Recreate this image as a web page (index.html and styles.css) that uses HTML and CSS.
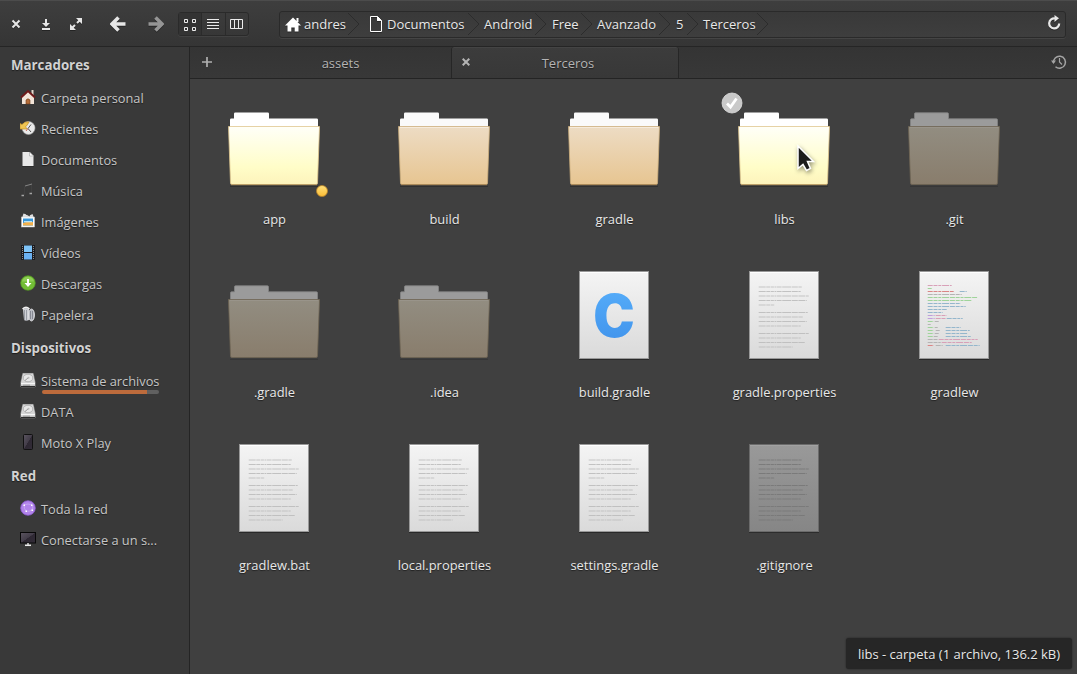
FILE: index.html
```html
<!DOCTYPE html>
<html lang="es">
<head>
<meta charset="utf-8">
<title>Terceros</title>
<link rel="stylesheet" href="styles.css">
</head>
<body>
<svg class="defs" width="0" height="0">
  <defs>
    <linearGradient id="gOpen" x1="0" y1="0" x2="0" y2="1"><stop offset="0" stop-color="#fffff8"/><stop offset=".7" stop-color="#fffdc8"/><stop offset="1" stop-color="#fdf3bb"/></linearGradient>
    <linearGradient id="gTan" x1="0" y1="0" x2="0" y2="1"><stop offset="0" stop-color="#eddcc4"/><stop offset="1" stop-color="#e7c591"/></linearGradient>
    <linearGradient id="gHid" x1="0" y1="0" x2="0" y2="1"><stop offset="0" stop-color="#928d81"/><stop offset="1" stop-color="#897d6c"/></linearGradient>
    <linearGradient id="gPage" x1="0" y1="0" x2="0" y2="1"><stop offset="0" stop-color="#f4f4f4"/><stop offset="1" stop-color="#dadada"/></linearGradient>
    <linearGradient id="gPageHid" x1="0" y1="0" x2="0" y2="1"><stop offset="0" stop-color="#999"/><stop offset="1" stop-color="#868686"/></linearGradient>
    <linearGradient id="gBlue" x1="0" y1="0" x2="0" y2="1"><stop offset="0" stop-color="#58b0fb"/><stop offset="1" stop-color="#3e90ea"/></linearGradient>
    <linearGradient id="gDot" x1="0" y1="0" x2="0" y2="1"><stop offset="0" stop-color="#ffe07a"/><stop offset="1" stop-color="#fbbc36"/></linearGradient>
    <linearGradient id="gScreen" x1="0" y1="0" x2="1" y2="1"><stop offset="0" stop-color="#5b5560"/><stop offset=".5" stop-color="#433d49"/><stop offset=".52" stop-color="#2e2833"/><stop offset="1" stop-color="#322c37"/></linearGradient>
  </defs>
  <symbol id="folder-open" viewBox="0 0 96 96">
    <path d="M4 95.300H92" stroke="#000" stroke-opacity=".3"/>
    <path d="M4 36V28.800q0-1.300 1.300-1.300H8V22.800q0-1.300 1.300-1.300H41.700q1.300 0 1.300 1.300V27.500H90.700q1.300 0 1.300 1.300V36z" fill="#fff"/>
    <path d="M2.500 35.500H93.500L91.500 92q0 1.500-1.500 1.500H6q-1.500 0-1.500-1.500z" fill="url(#gOpen)" stroke="#e0c68e" stroke-width=".8"/>
    <path d="M5 93.700H91" stroke="#b89a62"/>
  </symbol>
  <symbol id="folder" viewBox="0 0 96 96">
    <path d="M4 95.300H92" stroke="#000" stroke-opacity=".3"/>
    <path d="M4 36V28.800q0-1.300 1.300-1.300H8V22.800q0-1.300 1.300-1.300H41.700q1.300 0 1.300 1.300V27.500H90.700q1.300 0 1.300 1.300V36z" fill="#fafafa"/>
    <path d="M2.500 35.500H93.500L91.500 92q0 1.500-1.500 1.500H6q-1.500 0-1.500-1.500z" fill="url(#gTan)" stroke="#cdae7c" stroke-width=".8"/>
    <path d="M4 36.500H92" stroke="#f6ebdb"/>
    <path d="M5 93.700H91" stroke="#a88554"/>
  </symbol>
  <symbol id="folder-hidden" viewBox="0 0 96 96">
    <path d="M4 95.300H92" stroke="#000" stroke-opacity=".2"/>
    <path d="M4.500 36V28.800q0-1 1-1H8.500V22.800q0-1 1-1H41.500q1 0 1 1V27.800H90.500q1 0 1 1V36z" fill="#9b9b9b" stroke="#858585" stroke-width=".8"/>
    <path d="M2.500 35.500H93.500L91.500 92q0 1.500-1.500 1.500H6q-1.500 0-1.500-1.500z" fill="url(#gHid)" stroke="#6f6553" stroke-width=".8"/>
    <path d="M4 36.500H92" stroke="#99948a"/>
  </symbol>
  <symbol id="lines" viewBox="0 0 96 96">
    <g fill="none" stroke-dasharray="7 .6 4 .6 3 .6 1.500 .6 5 .6 9 .6 6 .6">
      <path stroke-width="2" stroke-opacity=".42" d="M22.700 23h43M22.700 32h50M22.700 41h16M22.700 53h44M22.700 62h42M22.700 74h42M22.700 83h34"/>
      <path stroke-width="1" stroke-opacity=".9" d="M22.700 27.500h42M22.700 36.500h48M22.700 48.500h49M22.700 57.500h48M22.700 69.500h50M22.700 78.500h46"/>
    </g>
  </symbol>
  <symbol id="page" viewBox="0 0 96 96">
    <path d="M13 95.500H83" stroke="#000" stroke-opacity=".35"/>
    <rect x="13.500" y="7.500" width="69" height="87" fill="url(#gPage)" stroke="#999"/>
    <path d="M14 8.500H82" stroke="#fff"/>
  </symbol>
  <symbol id="text" viewBox="0 0 96 96"><use href="#page"/><use href="#lines" stroke="#bdbdbd"/></symbol>
  <symbol id="text-hidden" viewBox="0 0 96 96">
    <path d="M13 95.500H83" stroke="#000" stroke-opacity=".3"/>
    <rect x="13.500" y="7.500" width="69" height="87" fill="url(#gPageHid)" stroke="#6b6b6b"/>
    <path d="M14 8.500H82" stroke="#a2a2a2"/>
    <use href="#lines" stroke="#787878"/>
  </symbol>
  <symbol id="script" viewBox="0 0 96 96">
    <use href="#page"/>
    <g fill="none" stroke-width="1" stroke-dasharray="5 .8 4 .8 3 .8 7 .8">
      <path stroke="#d8a0b8" d="M21.700 21.500h24M29.700 51.500h11M29.700 54.500h10M32.700 75.500h39M35.700 78.500h30"/>
      <path stroke="#9fd49a" d="M21.700 24.500h4M21.700 33.500h50M21.700 36.500h44M21.700 57.500h6M21.700 63.500h6M21.700 66.500h6M21.700 69.500h6M21.700 72.500h5"/>
      <path stroke="#da8585" d="M21.700 27.500h26M21.700 81.500h6"/>
      <path stroke="#94b6cc" d="M53.700 27.500h7M21.700 39.500h33M21.700 42.500h38M21.700 45.500h19M21.700 48.500h15M40.700 54.500h16M39.700 63.500h15M39.700 66.500h24M39.700 69.500h22M39.700 72.500h25M39.700 81.500h34"/>
      <path stroke="#b4b4b4" d="M21.700 30.500h34M28.700 57.500h4M21.700 60.500h3M28.700 63.500h3M29.700 66.500h4M28.700 69.500h4M27.700 72.500h4M21.700 75.500h10M21.700 78.500h13M29.700 81.500h7"/>
      <path stroke="#bf9fdc" d="M21.700 51.500h7M21.700 54.500h7"/>
    </g>
  </symbol>
  <symbol id="drive" viewBox="0 0 16 16">
    <path d="M2.500 1H13.500L15.500 10.500v4q0 .8-1 .8H1.500q-1 0-1-.8V10.500z" fill="#d6d6d6" stroke="#444" stroke-width=".5"/>
    <path d="M1 11.500H15" stroke="#f6f6f6"/><path d="M1 14.500H15" stroke="#2c2c2c" stroke-width="1.200"/><path d="M3 13.200h7" stroke="#888" stroke-width=".8"/>
    <ellipse cx="8" cy="6" rx="4.800" ry="3.800" fill="#e8e8e8" stroke="#a8a8a8" stroke-width=".8"/>
    <path d="M5 8.500l3-2.500" stroke="#999"/><circle cx="8.500" cy="5.800" r="1" fill="#bbb"/>
  </symbol>
</svg>

<div class="window">
  <header class="toolbar">
    <svg class="win-close" width="10" height="10"><path d="M1.500 1.500l7 7M8.500 1.500l-7 7" stroke="#e6e6e6" stroke-width="2"/></svg>
    <svg class="win-min" width="10" height="12"><path d="M5 1v6M1 11h8" stroke="#e6e6e6" stroke-width="2"/><path d="M1 5h8L5 9z" fill="#e6e6e6"/></svg>
    <svg class="win-max" width="12" height="12"><path d="M6 0h6v6zM0 6v6h6z" fill="#e6e6e6"/><path d="M10 2L7 5M2 10l3-3" stroke="#e6e6e6" stroke-width="2"/></svg>
    <svg class="nav-back" width="16" height="16"><path d="M8.500 1.500L2 8l6.500 6.500M2.500 8H15.500" fill="none" stroke="#e6e6e6" stroke-width="3.600"/></svg>
    <svg class="nav-next" width="16" height="16"><path d="M7.500 1.500L14 8l-6.500 6.500M13.500 8H.5" fill="none" stroke="#959595" stroke-width="3.600"/></svg>
    <div class="views">
      <div class="view view-on"><svg width="13" height="13"><path d="M1.500 1.500h3v3h-3zM9.500 1.500h3v3h-3zM1.500 9.500h3v3h-3zM9.500 9.500h3v3h-3z" fill="none" stroke="#ececec"/></svg></div>
      <div class="view"><svg width="12" height="11"><path d="M0 .5h12M0 3.500h12M0 6.500h12M0 9.500h12" stroke="#ececec"/></svg></div>
      <div class="view view-columns"><svg width="13" height="11"><path d="M.5 .5h12v9H.5zM4.500 1v9M8.500 1v9" fill="none" stroke="#ececec"/></svg></div>
    </div>
    <div class="path">
      <svg class="home" width="16" height="15"><path d="M8 .5L16 8.500H13.500V14.500H9.700V10.500H6.300V14.500H2.500V8.500H0zM11.500 1h2v4h-2z" fill="#fff"/></svg>
      <span class="crumb crumb-home">andres</span><svg class="chev" width="12" height="24"><path d="M0 1l11 11L0 23"/></svg>
      <svg class="paper" width="12" height="16"><path d="M.5 .5H7.500L11.500 4.500V15.500H.5z" fill="none" stroke="#fff"/><path d="M7 0v5h5z" fill="#fff"/></svg>
      <span class="crumb crumb-docs">Documentos</span><svg class="chev" width="12" height="24"><path d="M0 1l11 11L0 23"/></svg>
      <span class="crumb crumb-and">Android</span><svg class="chev" width="12" height="24"><path d="M0 1l11 11L0 23"/></svg>
      <span class="crumb crumb-free">Free</span><svg class="chev" width="12" height="24"><path d="M0 1l11 11L0 23"/></svg>
      <span class="crumb crumb-adv">Avanzado</span><svg class="chev" width="12" height="24"><path d="M0 1l11 11L0 23"/></svg>
      <span class="crumb crumb-five">5</span><svg class="chev" width="12" height="24"><path d="M0 1l11 11L0 23"/></svg>
      <span class="crumb crumb-ter">Terceros</span><svg class="chev" width="12" height="24"><path d="M0 1l11 11L0 23"/></svg>
      <svg class="reload" width="13" height="15"><path d="M7 3.500A5 5 0 1 0 11.200 8.500" fill="none" stroke="#e8e8e8" stroke-width="2.200"/><path d="M6.500 0L11 3.300 6.500 7z" fill="#e8e8e8"/></svg>
    </div>
  </header>

  <div class="main">
    <nav class="sidebar">
      <h2>Marcadores</h2>
      <div class="place"><svg width="16" height="16"><path d="M2 7v8h12V7L8 2z" fill="#f2e4d8"/><path d="M11.500 1h2v5h-2z" fill="#e8dcd0"/><path d="M1 8.500L8 2l7 6.500" fill="none" stroke="#6d1a1a" stroke-width="2"/><path d="M6 15V11q2-2.500 4 0V15z" fill="#b56d3a" stroke="#6b3a1c" stroke-width=".6"/></svg><span>Carpeta personal</span></div>
      <div class="place"><svg width="16" height="16"><circle cx="8.500" cy="8" r="6.500" fill="#e9e9e9" stroke="#aaa" stroke-width=".6"/><path d="M8 8.500l3-4M8 8.500l3 3.500" stroke="#555" stroke-width="1" fill="none"/><path d="M8 8.500L6 11" stroke="#cf6b5e"/><path d="M0 3.500L2 4.500Q5 1 9 2L7 5.500 5.500 6.500 7 9H0z" fill="#f0c552" stroke="#c4932b" stroke-width=".7"/></svg><span>Recientes</span></div>
      <div class="place"><svg width="16" height="16"><path d="M2.500 1H9.500L13.500 5V15H2.500z" fill="#e8e8e8"/><path d="M9.500 1V5h4z" fill="#fff" stroke="#aaa" stroke-width=".7"/><path d="M2 15.500H14" stroke="#222" stroke-opacity=".5"/></svg><span>Documentos</span></div>
      <div class="place"><svg width="16" height="16"><path d="M5 4L12 2" stroke="#858585" stroke-width="1"/><path d="M4.500 4.500V13M11.500 3V12" stroke="#434343" stroke-width=".7"/><path d="M1.500 13.500h2.500M9.500 11.500h2.500" stroke="#a5a5a5" stroke-width="1.600"/></svg><span>Música</span></div>
      <div class="place"><svg width="16" height="16"><path d="M3.500 .5l6 2 3-1.500 1.500 4H2z" fill="#e0e0e0"/><path d="M6 1l4 2" stroke="#333"/><rect x="1.500" y="4" width="13" height="10" fill="#fff" stroke="#ccc" stroke-width=".5"/><rect x="3" y="5.500" width="10" height="7" fill="#3597dc"/><path d="M3 10q5-2 10-1v3.500H3z" fill="#f2b04b"/><path d="M4 8.700h8" stroke="#c6ecfa" stroke-width="1.200"/></svg><span>Imágenes</span></div>
      <div class="place"><svg width="16" height="16"><rect x="1" y="1" width="14" height="15" fill="#1c1c20"/><rect x="4" y="1.500" width="8" height="6.500" fill="#7fc4f8"/><rect x="4" y="9" width="8" height="6.500" fill="#6bb1f2"/><path d="M2.500 2v13M13.500 2v13" stroke="#888" stroke-dasharray="1 1"/></svg><span>Vídeos</span></div>
      <div class="place"><svg width="16" height="16"><circle cx="8" cy="8" r="7.300" fill="#72bd35" stroke="#559b21" stroke-width=".7"/><path d="M2 6.500a6.200 6.200 0 0 1 12 0z" fill="#a2d96a" fill-opacity=".6"/><path d="M7 4h2v4h2.500L8 12 4.500 8H7z" fill="#fff"/></svg><span>Descargas</span></div>
      <div class="place"><svg width="16" height="16"><path d="M3 3q3-2 6 0v11q-3 1.500-5 0z" fill="#cfd1d6"/><path d="M4.500 4v10M6.500 4v11" stroke="#8c8f98" stroke-width=".8"/><path d="M2.500 3Q6-.5 9.500 3" fill="none" stroke="#f0f0f0" stroke-width="1.400"/><ellipse cx="11.500" cy="9" rx="3" ry="6" fill="#b9bcc3" stroke="#e6e6e8" stroke-width=".8"/><path d="M10.500 5v8M12.500 5v8" stroke="#787b85" stroke-width=".8"/></svg><span>Papelera</span></div>
      <h2>Dispositivos</h2>
      <div class="place"><svg width="16" height="16"><use href="#drive"/></svg><span class="disk">Sistema de archivos<i class="usage"></i></span></div>
      <div class="place"><svg width="16" height="16"><use href="#drive"/></svg><span>DATA</span></div>
      <div class="place"><svg width="16" height="16"><rect x="3.500" y=".5" width="9" height="15" rx="1" fill="url(#gScreen)" stroke="#111"/></svg><span>Moto X Play</span></div>
      <h2>Red</h2>
      <div class="place"><svg width="16" height="16"><circle cx="8" cy="8" r="7.300" fill="#b183ea" stroke="#8b5bd0" stroke-width=".8"/><path d="M4 5q4-2 8 0M4 5q0 4 2 6M12 5q1 3 0 5-3 2-6 1" fill="none" stroke="#cfb2f5" stroke-width=".7"/><path d="M3.500 4.500h1.500v1.500H3.500zM11 4.500h1.500v1.500H11zM5.500 10.500h1.500v1.500H5.500zM11.500 9.500h1.500v1.500h-1.500z" fill="#fff"/></svg><span>Toda la red</span></div>
      <div class="place"><svg width="16" height="16"><rect x=".5" y="1.500" width="15" height="10.500" fill="url(#gScreen)" stroke="#080808"/><path d="M7 12h2v2H7z" fill="#aaa"/><path d="M5 14.300h6" stroke="#eee" stroke-width="1.500"/></svg><span>Conectarse a un s...</span></div>
    </nav>

    <section class="content">
      <div class="tabs">
        <div class="tab-add"><svg width="10" height="10"><path d="M5 0v10M0 5h10" stroke="#b0b0b0" stroke-width="1.700"/></svg></div>
        <div class="tab tab-first">assets</div>
        <div class="tab tab-on"><svg class="tab-close" width="8" height="8"><path d="M.7 .7l6.600 6.600M7.300 .7L.7 7.300" stroke="#b4b4b4" stroke-width="2"/></svg>Terceros</div>
        <svg class="history" width="16" height="16"><path d="M2.500 9A6 6 0 1 1 4.500 12.700" fill="none" stroke="#a4a4a4" stroke-width="1.500"/><path d="M0 6.500h5L2.500 10z" fill="#a4a4a4"/><path d="M8.500 4v4l2.500 2.500" fill="none" stroke="#a4a4a4" stroke-width="1.200"/></svg>
      </div>
      <div class="files">
        <div class="file"><div class="thumb"><svg width="96" height="96"><use href="#folder-open"/></svg><svg class="dot" width="12" height="12"><circle cx="6" cy="6" r="5.500" fill="url(#gDot)" stroke="#b5822b" stroke-width=".8"/></svg></div><span>app</span></div>
        <div class="file"><div class="thumb"><svg width="96" height="96"><use href="#folder"/></svg></div><span>build</span></div>
        <div class="file"><div class="thumb"><svg width="96" height="96"><use href="#folder"/></svg></div><span>gradle</span></div>
        <div class="file"><div class="thumb"><svg width="96" height="96"><use href="#folder-open"/></svg>
          <svg class="check" width="22" height="22"><circle cx="11" cy="11" r="10" fill="#c9c9c9" stroke="#dedede" stroke-width=".8"/><path d="M6 11.500l3.500 3.500L15.500 6.500" fill="none" stroke="#fff" stroke-width="2.800"/></svg>
          <svg class="cursor" width="20" height="30"><path d="M2 2V24.500L7 20.500 10.500 26.500 14.500 24.500 11.500 17.500H17.500z" fill="#1c1c1c" stroke="#fff" stroke-width="1.500"/></svg></div><span>libs</span></div>
        <div class="file"><div class="thumb"><svg width="96" height="96"><use href="#folder-hidden"/></svg></div><span>.git</span></div>
        <div class="file"><div class="thumb"><svg width="96" height="96"><use href="#folder-hidden"/></svg></div><span>.gradle</span></div>
        <div class="file"><div class="thumb"><svg width="96" height="96"><use href="#folder-hidden"/></svg></div><span>.idea</span></div>
        <div class="file"><div class="thumb"><svg width="96" height="96"><use href="#page"/><text class="c-letter" transform="translate(48 72.500) scale(.94 1)" text-anchor="middle" fill="url(#gBlue)">C</text></svg></div><span>build.gradle</span></div>
        <div class="file"><div class="thumb"><svg width="96" height="96"><use href="#text"/></svg></div><span>gradle.properties</span></div>
        <div class="file"><div class="thumb"><svg width="96" height="96"><use href="#script"/></svg></div><span>gradlew</span></div>
        <div class="file"><div class="thumb"><svg width="96" height="96"><use href="#text"/></svg></div><span>gradlew.bat</span></div>
        <div class="file"><div class="thumb"><svg width="96" height="96"><use href="#text"/></svg></div><span>local.properties</span></div>
        <div class="file"><div class="thumb"><svg width="96" height="96"><use href="#text"/></svg></div><span>settings.gradle</span></div>
        <div class="file"><div class="thumb"><svg width="96" height="96"><use href="#text-hidden"/></svg></div><span>.gitignore</span></div>
      </div>
      <div class="status">libs - carpeta (1 archivo, 136.2 kB)</div>
    </section>
  </div>
</div>
</body>
</html>
```
FILE: styles.css
```css
* { box-sizing: border-box; }
body { margin: 0; font: 13px/20px "Open Sans", sans-serif; color: #e8e8e8; background: #404040; }
svg { display: block; flex: none; }
.defs { position: absolute; }
.window { width: 1077px; height: 674px; display: flex; flex-direction: column; overflow: hidden; text-shadow: 0 1px 1px rgba(0,0,0,.5); }

.toolbar { height: 47px; flex: none; display: flex; align-items: center; padding: 2px 11px 0 11px; background: linear-gradient(#3e3e3e, #353535); border-bottom: 1px solid #252525; box-shadow: inset 0 1px #4c4c4c; }
.toolbar > svg, .path > svg:not(.chev) { filter: drop-shadow(0 1px 0 rgba(0,0,0,.35)); }
.win-min { margin-left: 20px; }
.win-max { margin-left: 19px; }
.nav-back { margin-left: 28px; }
.nav-next { margin-left: 22px; }
.views { display: flex; margin-left: 14px; height: 24px; border: 1px solid #2a2a2a; border-radius: 3px; box-shadow: 0 1px rgba(255,255,255,.06); }
.view { width: 24px; padding-right: 1px; display: flex; align-items: center; justify-content: center; }
.view + .view { border-left: 1px solid #2b2b2b; }
.view-on { width: 22px; background: #333; }
.view-columns { width: 23px; padding-left: 4px; justify-content: flex-start; }
.path { margin-left: 30px; flex: 1; height: 27px; display: flex; align-items: center; padding: 0 4px 0 5px; border: 1px solid #2a2a2a; border-radius: 3px; background: linear-gradient(#393939, #3e3e3e); box-shadow: 0 1px rgba(255,255,255,.07); }
.crumb { margin-left: 4px; white-space: nowrap; }
.crumb-home { margin-left: 3px; width: 44px; }
.crumb-docs { margin-left: 5px; width: 81px; }
.crumb-and { width: 51px; }
.crumb-free { margin-left: 5px; width: 29px; }
.crumb-adv { margin-left: 4px; width: 62px; }
.crumb-five { margin-left: 5px; width: 11px; }
.crumb-ter { margin-left: 4px; width: 54px; }
.chev path { fill: none; stroke: #2c2c2c; }
.paper { margin-left: 10px; }
.reload { margin: 0 0 3px auto; }

.main { flex: 1; display: flex; min-height: 0; }
.sidebar { width: 190px; flex: none; padding-top: 1px; background: #393939; border-right: 1px solid #242424; color: #c6c6c6; font-size: 12.8px; }
.sidebar h2 { margin: 0; height: 35px; padding-left: 11px; font-size: 13.3px; line-height: 34px; color: #d2d2d2; }
.place { height: 31px; display: flex; align-items: center; padding-left: 20px; gap: 5px; line-height: 31px; white-space: nowrap; }
.place svg { margin-bottom: 3px; }
.disk { position: relative; }
.usage { position: absolute; left: 1px; top: 24px; width: 117px; height: 4px; border-radius: 2px; background: linear-gradient(90deg, #bd6b3c 105px, #606060 105px); }

.content { flex: 1; position: relative; background: #404040; }
.tabs { height: 32px; display: flex; align-items: center; background: linear-gradient(#343434, #383838); border-bottom: 1px solid #242424; color: #b4b4b4; padding-right: 10px; }
.tab-add { width: 39px; padding: 0 0 2px 12px; }
.tab { width: 222px; height: 31px; line-height: 32px; text-align: center; }
.tab-first { padding-left: 1px; }
.tab-on { position: relative; width: 228px; padding-left: 6px; background: linear-gradient(#3c3c3c, #383838); border: 1px solid #262626; border-width: 0 1px; border-radius: 3px 3px 0 0; box-shadow: inset 0 1px #444; }
.tab-close { position: absolute; left: 10px; top: 11px; }
.history { margin: 0 0 2px auto; }

.files { display: grid; grid-template-columns: repeat(5, 170px); grid-auto-rows: 173px; margin-left: -1px; padding-top: 12px; }
.file { display: flex; flex-direction: column; align-items: center; gap: 22px; }
.file span { padding-left: 1px; font-size: 12.9px; }
.thumb { position: relative; width: 96px; height: 96px; }
.dot { position: absolute; left: 90px; top: 94px; }
.check { position: absolute; left: -15px; top: 1px; }
.cursor { position: absolute; left: 60px; top: 53px; filter: drop-shadow(1px 2px 2px rgba(0,0,0,.4)); }
.c-letter { font: 900 59px Inter, sans-serif; text-shadow: none; }
.status { position: absolute; right: 5px; bottom: 5px; width: 226px; height: 31px; line-height: 33px; text-align: center; white-space: nowrap; background: #262626; border-radius: 3px; box-shadow: 0 0 2px rgba(0,0,0,.5); }
```
